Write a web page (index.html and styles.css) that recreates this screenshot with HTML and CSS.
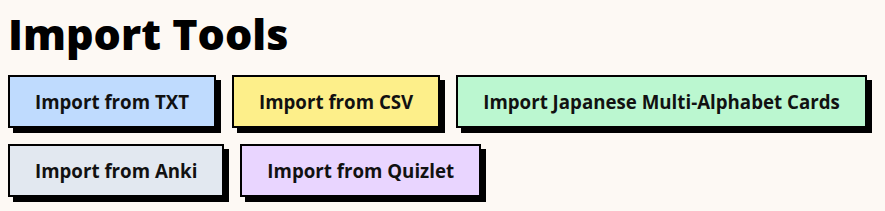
FILE: index.html
```html
<!DOCTYPE html>
<html>
<head>
<meta charset="utf-8">
<link rel="stylesheet" href="styles.css">
</head>
<body>
<h1 class="title">Import Tools</h1>
<div class="tools">
  <button class="tool blue">Import from TXT</button>
  <button class="tool yellow">Import from CSV</button>
  <button class="tool green">Import Japanese Multi-Alphabet Cards</button>
  <button class="tool gray">Import from Anki</button>
  <button class="tool purple">Import from Quizlet</button>
</div>
</body>
</html>
```
FILE: styles.css
```css
html, body { margin: 0; padding: 0; }
body {
  background: #fdf9f4;
  font-family: "Open Sans", "Noto Sans", sans-serif;
  padding: 8px;
  color: #000;
}
.title {
  margin: 0 0 15px 0;
  font-size: 43px;
  font-weight: 800;
  line-height: 52px;
  letter-spacing: 0;
}
.tools {
  display: flex;
  flex-wrap: wrap;
  gap: 16px 16px;
}
.tool {
  font-family: inherit;
  font-size: 18.7px;
  font-weight: 700;
  color: #111;
  border: 2px solid #000;
  box-shadow: 5px 5px 0 #000;
  padding: 12px 25px;
  line-height: 25px;
  border-radius: 0;
  cursor: pointer;
}
.blue { background: #bfdbfe; }
.yellow { background: #fdef8a; }
.green { background: #bbf7d0; }
.gray { background: #e2e8f0; }
.purple { background: #e9d5ff; }
```
